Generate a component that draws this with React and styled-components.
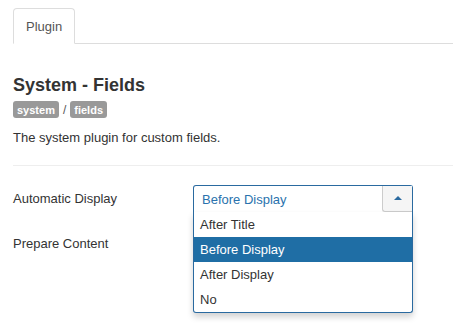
import React from 'react';
import styled, { createGlobalStyle } from 'styled-components';

const GlobalStyle = createGlobalStyle`
    html, body {
        margin: 0;
        min-height: 100%;
        background: #fff;
        font-family: "Liberation Sans", Arial, sans-serif;
        color: #333;
    }
`

const Page = styled.div`
    padding: 8px 0 0 13px;
    min-height: 335px;
    box-sizing: border-box;
`

const Tabs = styled.div`
    display: flex;
    border-bottom: 1px solid #ddd;
    height: 35px;
`

const Tab = styled.div`
    display: flex;
    align-items: center;
    padding: 0 12px;
    font-size: 13px;
    color: #555;
    background: #fff;
    border: 1px solid #ddd;
    border-bottom-color: #fff;
    border-radius: 4px 4px 0 0;
    margin-bottom: -1px;
`

const Title = styled.h2`
    margin: 31px 0 0;
    font-size: 18px;
    line-height: 20px;
    font-weight: bold;
    color: #333;
`

const Tags = styled.div`
    display: flex;
    align-items: center;
    gap: 4px;
    margin-top: 6px;
    font-size: 12px;
    color: #555;
`

const Badge = styled.span`
    display: inline-flex;
    align-items: center;
    height: 17px;
    padding: 0 4px;
    background: #999;
    color: #fff;
    font-size: 11px;
    font-weight: bold;
    border-radius: 3px;
`

const Desc = styled.p`
    margin: 11px 0 0;
    font-size: 13px;
    line-height: 18px;
`

const Rule = styled.hr`
    margin: 18px 0 0;
    border: 0;
    border-top: 1px solid #eee;
`

const Form = styled.div`
    display: flex;
    flex-direction: column;
    gap: 18px;
    margin-top: 19px;
`

const Row = styled.div`
    display: flex;
    align-items: center;
    height: 27px;
`

const Label = styled.div`
    width: 180px;
    font-size: 13px;
`

const SelectWrap = styled.div`
    position: relative;
    width: 220px;
    z-index: 2;
`

const SelectBox = styled.div`
    display: flex;
    height: 27px;
    box-sizing: border-box;
    border: 1px solid #2a6aa0;
    border-radius: 3px 3px 0 0;
    border-bottom: 0;
    background: #fff;
`

const SelectValue = styled.div`
    flex: 1;
    display: flex;
    align-items: center;
    padding-left: 8px;
    font-size: 13px;
    color: #2a72ad;
`

const Caret = styled.div`
    width: 29px;
    display: flex;
    align-items: center;
    justify-content: center;
    background: #f5f5f5;
    border-left: 1px solid #ccc;
    border-bottom: 1px solid #ccc;
    border-bottom-left-radius: 3px;
    &:after {
        content: '';
        border-left: 4px solid transparent;
        border-right: 4px solid transparent;
        border-bottom: 4px solid #2a6aa0;
        margin-top: -1px;
    }
`

const Menu = styled.ul`
    position: absolute;
    top: 27px;
    left: 0;
    right: 0;
    margin: 0;
    padding: 0;
    list-style: none;
    background: #fff;
    border: 1px solid #2a6aa0;
    border-top: 0;
    border-radius: 0 0 3px 3px;
    box-shadow: 0 4px 6px rgba(0,0,0,0.18);
`

const Option = styled.li`
    height: 25px;
    display: flex;
    align-items: center;
    padding-left: 6px;
    font-size: 13px;
    color: ${props => props.active ? '#fff' : '#333'};
    background: ${props => props.active ? '#1f6ea5' : 'transparent'};
`

const options = ['After Title', 'Before Display', 'After Display', 'No'];

const App = () => {
    const selected = 'Before Display';

    return (
        <>
            <GlobalStyle />
            <Page>
                <Tabs>
                    <Tab>Plugin</Tab>
                </Tabs>
                <Title>System - Fields</Title>
                <Tags>
                    <Badge>system</Badge>
                    /
                    <Badge>fields</Badge>
                </Tags>
                <Desc>The system plugin for custom fields.</Desc>
                <Rule />
                <Form>
                    <Row>
                        <Label>Automatic Display</Label>
                        <SelectWrap>
                            <SelectBox>
                                <SelectValue>{selected}</SelectValue>
                                <Caret />
                            </SelectBox>
                            <Menu>
                                {options.map(o => (
                                    <Option key={o} active={o === selected}>{o}</Option>
                                ))}
                            </Menu>
                        </SelectWrap>
                    </Row>
                    <Row>
                        <Label>Prepare Content</Label>
                    </Row>
                </Form>
            </Page>
        </>
    )
}

export default App;
